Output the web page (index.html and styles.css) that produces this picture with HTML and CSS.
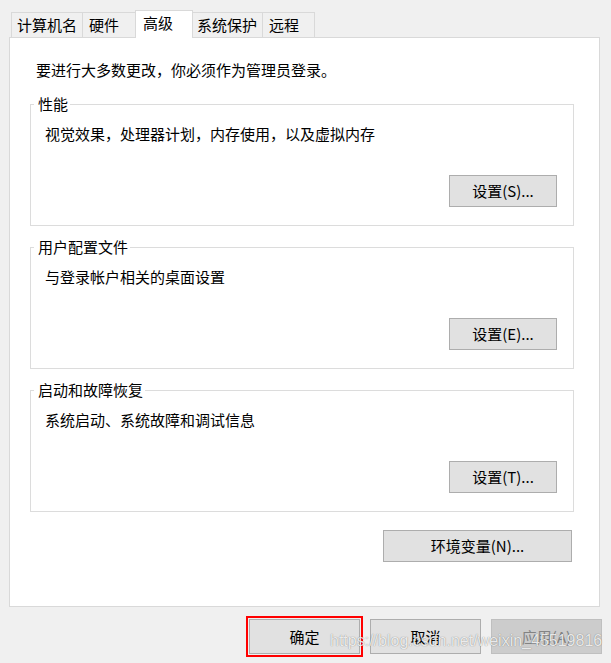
FILE: index.html
```html
<!DOCTYPE html>
<html lang="zh-CN">
<head>
<meta charset="utf-8">
<title>系统属性 - 高级</title>
<link rel="stylesheet" href="styles.css">
</head>
<body>
<div class="tabs">
  <div class="tab t1">计算机名</div>
  <div class="tab t2">硬件</div>
  <div class="tab active t3">高级</div>
  <div class="tab t4">系统保护</div>
  <div class="tab t5">远程</div>
</div>
<div class="panel">
  <div class="intro">要进行大多数更改，你必须作为管理员登录。</div>
  <div class="group">
    <div class="legend">性能</div>
    <div class="desc">视觉效果，处理器计划，内存使用，以及虚拟内存</div>
    <div class="row"><button class="btn set">设置(S)...</button></div>
  </div>
  <div class="group">
    <div class="legend">用户配置文件</div>
    <div class="desc">与登录帐户相关的桌面设置</div>
    <div class="row"><button class="btn set">设置(E)...</button></div>
  </div>
  <div class="group">
    <div class="legend">启动和故障恢复</div>
    <div class="desc">系统启动、系统故障和调试信息</div>
    <div class="row"><button class="btn set">设置(T)...</button></div>
  </div>
  <div class="row env-row"><button class="btn env">环境变量(N)...</button></div>
</div>
<div class="footer">
  <button class="btn dlg ok">确定</button>
  <button class="btn dlg">取消</button>
  <button class="btn dlg disabled">应用(A)</button>
</div>
<div class="watermark">https://blog.csdn.net/weixin_45519816</div>
</body>
</html>
```
FILE: styles.css
```css
* { box-sizing: border-box; }
html, body { margin: 0; padding: 0; }
body {
  width: 611px;
  height: 663px;
  background: #f0f0f0;
  font-family: "Microsoft YaHei", "Noto Sans CJK SC", "Noto Sans", sans-serif;
  font-size: 15px;
  color: #000;
  position: relative;
  overflow: hidden;
}
.tabs {
  display: flex;
  align-items: flex-end;
  padding: 10px 0 0 11px;
  height: 37px;
}
.tab {
  height: 25px;
  border: 1px solid #d9d9d9;
  border-bottom: none;
  background: #f0f0f0;
  line-height: 24px;
  padding-left: 5px;
  white-space: nowrap;
  margin-right: -1px;
}
.t1 { width: 72px; }
.t2 { width: 54px; padding-left: 6px; }
.t3 { width: 58px; padding-left: 7px; }
.t4 { width: 71px; padding-left: 4px; }
.t5 { width: 53px; padding-left: 6px; }
.tab.active {
  height: 28px;
  background: #fff;
  margin-bottom: -1px;
  position: relative;
  z-index: 1;
  line-height: 24px;
}
.panel {
  margin-left: 9px;
  width: 591px;
  background: #fff;
  border: 1px solid #d9d9d9;
  padding: 22px 25px 44px 20px;
}
.intro {
  line-height: 20px;
  margin-left: 6px;
}
.group {
  border: 1px solid #dcdcdc;
  padding: 0 16px 18px 14px;
  margin-top: 21px;
}
.intro + .group { margin-top: 24px; }
.legend {
  margin-top: -11px;
  margin-left: -11px;
  width: fit-content;
  background: #fff;
  padding: 0 2px 0 4px;
  line-height: 20px;
}
.desc {
  margin-top: 10px;
  line-height: 20px;
}
.row {
  display: flex;
  justify-content: flex-end;
}
.group .row { margin-top: 31px; }
.btn {
  font-family: inherit;
  font-size: 15px;
  color: #000;
  background: #e1e1e1;
  border: 1px solid #adadad;
  border-radius: 0;
  padding: 0;
  margin: 0;
  line-height: 20px;
}
.set { width: 108px; height: 32px; }
.env-row { margin-top: 18px; padding-right: 2px; }
.env { width: 189px; height: 32px; }
.footer {
  display: flex;
  justify-content: flex-end;
  gap: 10px;
  margin-top: 12px;
  padding-right: 9px;
}
.dlg { width: 111px; height: 35px; }
.ok {
  outline: 2px solid #ff0000;
  outline-offset: 1px;
}
.disabled {
  background: #cccccc;
  border-color: #bfbfbf;
  color: #838383;
}
.watermark {
  position: absolute;
  left: 330px;
  top: 629px;
  font-family: "Liberation Sans", Arial, sans-serif;
  font-size: 16px;
  line-height: 24px;
  color: rgba(255, 255, 255, 0.85);
  text-shadow: 0 0 1px rgba(0, 0, 0, 0.5);
  white-space: nowrap;
}
```
